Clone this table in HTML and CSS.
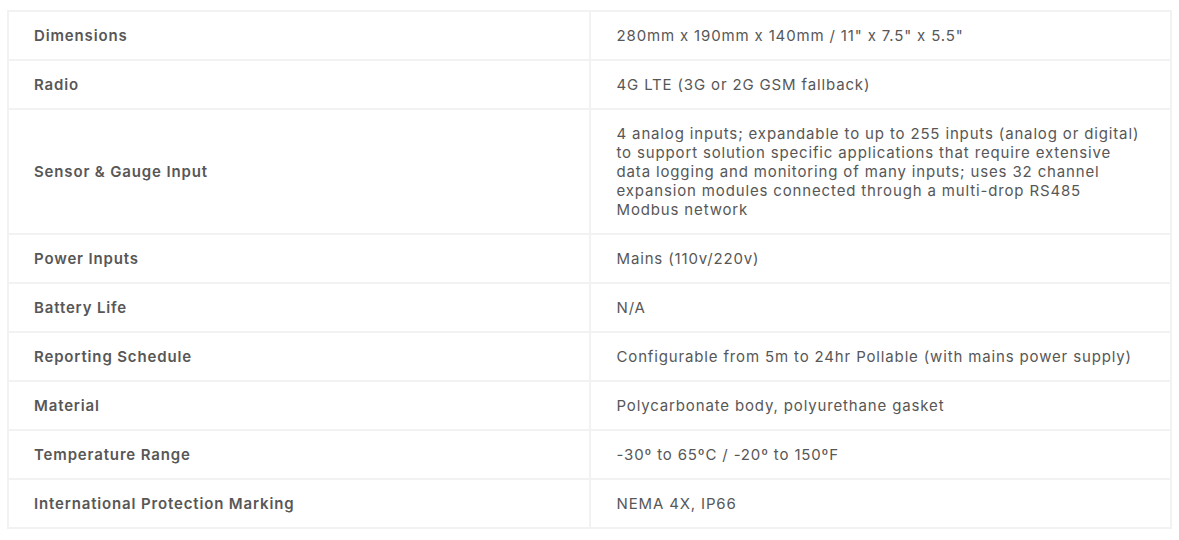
FILE: index.html
```html
<!DOCTYPE html>
<html lang="en">
<head>
<meta charset="utf-8">
<title>Specifications</title>
<link rel="stylesheet" href="styles.css">
</head>
<body>
<div class="wrap">
<table class="specs">
  <tbody>
    <tr><th>Dimensions</th><td>280mm x 190mm x 140mm / 11" x 7.5" x 5.5"</td></tr>
    <tr><th>Radio</th><td>4G LTE (3G or 2G GSM fallback)</td></tr>
    <tr><th>Sensor &amp; Gauge Input</th><td>4 analog inputs; expandable to up to 255 inputs (analog or digital) to support solution specific applications that require extensive data logging and monitoring of many inputs; uses 32 channel expansion modules connected through a multi-drop RS485 Modbus network</td></tr>
    <tr><th>Power Inputs</th><td>Mains (110v/220v)</td></tr>
    <tr><th>Battery Life</th><td>N/A</td></tr>
    <tr><th>Reporting Schedule</th><td>Configurable from 5m to 24hr Pollable (with mains power supply)</td></tr>
    <tr><th>Material</th><td>Polycarbonate body, polyurethane gasket</td></tr>
    <tr><th>Temperature Range</th><td>-30º to 65ºC / -20º to 150ºF</td></tr>
    <tr><th>International Protection Marking</th><td>NEMA 4X, IP66</td></tr>
  </tbody>
</table>
</div>
</body>
</html>
```
FILE: styles.css
```css
html, body {
  margin: 0;
  padding: 0;
  background: #ffffff;
}
.wrap {
  padding: 10px 7px 0 7px;
}
.specs {
  width: 1165px;
  border-collapse: collapse;
  table-layout: fixed;
  font-family: Inter, "Open Sans", "Liberation Sans", sans-serif;
  font-size: 15px;
  line-height: 19px;
  letter-spacing: 0.85px;
  color: #575757;
}
.specs th,
.specs td {
  border: 2px solid #f2f2f2;
  padding: 14px 25px 14px 26px;
  text-align: left;
  vertical-align: middle;
  width: 50%;
}
.specs th {
  font-weight: 600;
  padding-left: 25px;
  padding-right: 26px;
}
.specs td {
  font-weight: 400;
}
```
